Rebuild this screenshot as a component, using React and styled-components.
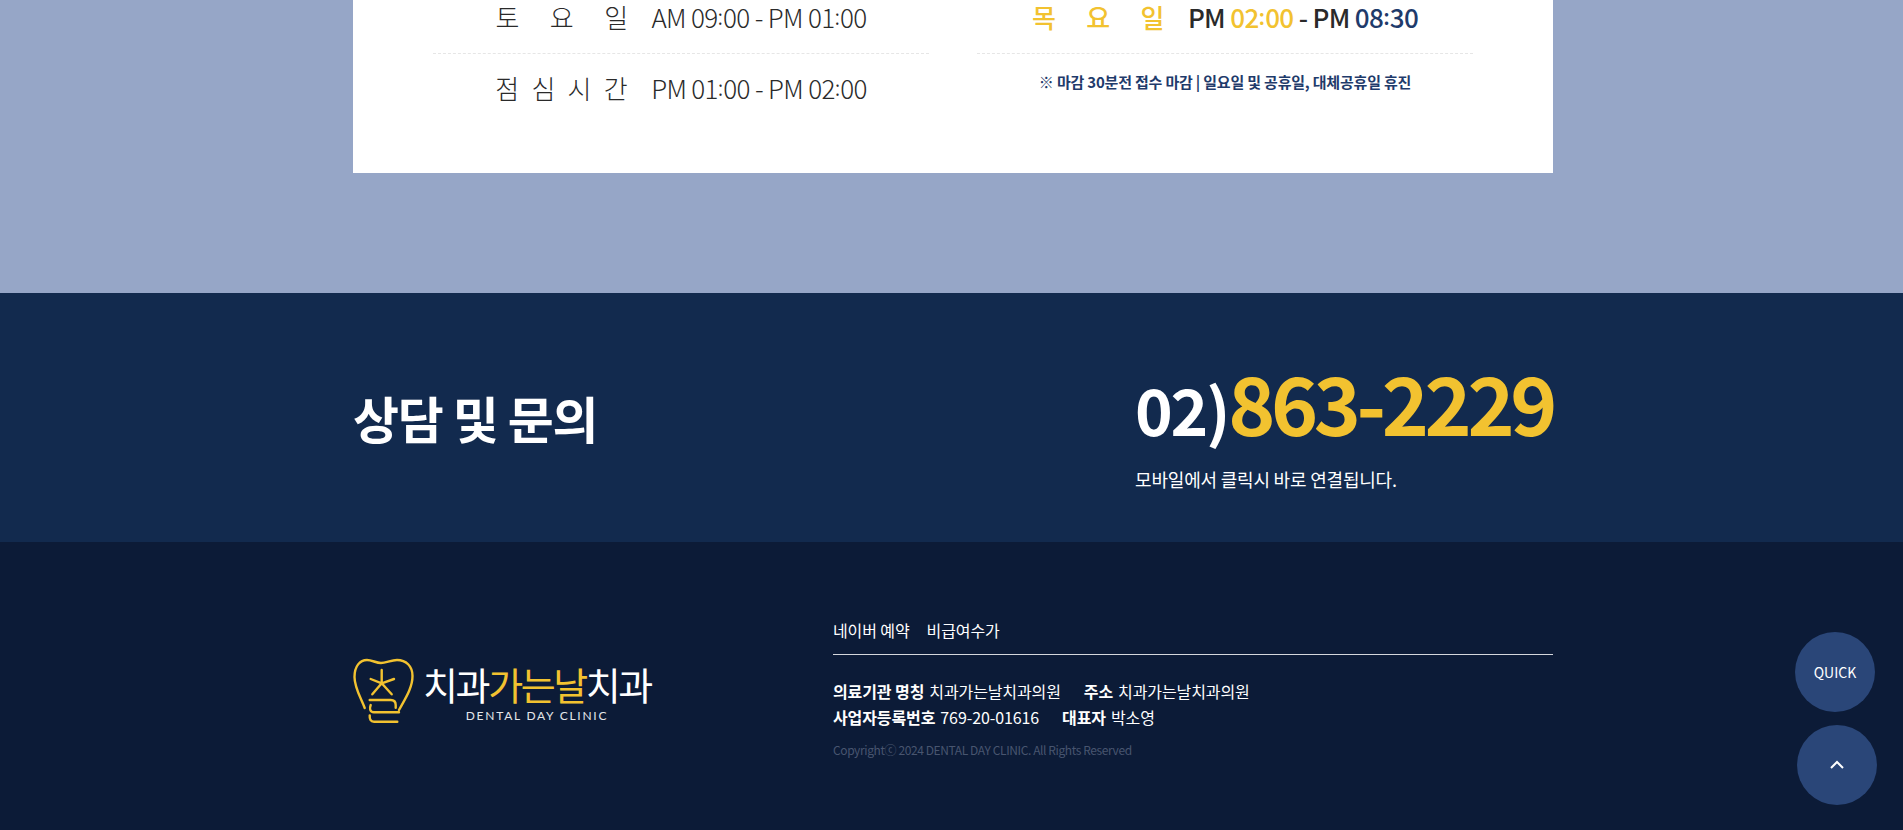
import React from "react";
import styled, { createGlobalStyle } from "styled-components";

const GlobalStyle = createGlobalStyle`
  html, body {
    margin: 0;
    padding: 0;
    overflow: hidden;
    background: #96a6c7;
    font-family: "Noto Sans CJK KR", "Noto Sans", sans-serif;
  }
  * { box-sizing: border-box; }
`;

const Wrapper = styled.div`
  width: 1200px;
  margin-left: 353px;
`;

const HoursSection = styled.section`
  height: 293px;
  background: #96a6c7;
`;

const Card = styled.div`
  width: 1200px;
  height: 173px;
  margin-left: 353px;
  padding: 0 80px;
  background: #fff;
  display: grid;
  grid-template-columns: 496px 496px;
  column-gap: 48px;
  align-content: start;
`;

const Row = styled.div`
  height: ${(p) => (p.$first ? 54 : 74)}px;
  padding-bottom: ${(p) => (p.$first ? 0 : 6)}px;
  display: flex;
  justify-content: center;
  align-items: ${(p) => (p.$first ? "flex-start" : "center")};
  gap: 24px;
  font-size: 26px;
  line-height: 34px;
  letter-spacing: -0.65px;
  color: #2a2a2a;
  font-weight: ${(p) => (p.$strong ? 500 : 300)};
  border-bottom: ${(p) => (p.$first ? "1px dashed #e6e6e6" : "0")};
`;

const Label = styled.span`
  width: 132px;
  text-align: justify;
  text-align-last: justify;
  color: ${(p) => p.$color || "inherit"};
`;

const Accent = styled.span`
  color: ${(p) => p.$color};
`;

const Colon = styled.span`
  font-size: 22px;
  vertical-align: 3px;
  line-height: 0;
  letter-spacing: 0;
`;

const Note = styled.p`
  margin: 0;
  height: 60px;
  font-size: 15px;
  font-weight: 700;
  line-height: 55px;
  letter-spacing: -0.2px;
  text-align: center;
  color: #1f3b6b;
`;

const NoteMark = styled.span`
  font-weight: 400;
`;

const ContactSection = styled.section`
  height: 249px;
  background: #122a4e;
`;

const ContactInner = styled(Wrapper)`
  height: 100%;
  display: flex;
  justify-content: space-between;
  align-items: flex-start;
`;

const ContactTitle = styled.h2`
  margin: 90px 0 0;
  font-size: 50px;
  line-height: 68px;
  font-weight: 700;
  letter-spacing: -1.2px;
  color: #fff;
`;

const Phone = styled.div`
  margin-top: 58px;
`;

const PhoneNumber = styled.div`
  display: flex;
  align-items: baseline;
  height: 100px;
  line-height: 100px;
  font-weight: 700;
  letter-spacing: -2.2px;
  color: #fff;
  font-size: 64px;
`;

const PhoneMain = styled.span`
  font-size: 80px;
  letter-spacing: -4.4px;
  color: #f2c230;
`;

const PhoneHint = styled.p`
  margin: 15px 0 0;
  font-size: 18px;
  line-height: 27px;
  letter-spacing: -0.2px;
  color: #fff;
`;

const Footer = styled.footer`
  height: 288px;
  background: #0c1b37;
`;

const FooterInner = styled(Wrapper)`
  display: flex;
  align-items: flex-start;
`;

const Logo = styled.div`
  width: 480px;
  margin-top: 116px;
  display: flex;
  align-items: flex-start;
  gap: 8px;
`;

const LogoText = styled.div`
  margin-top: 5px;
  display: flex;
  flex-direction: column;
  align-items: center;
  color: #fff;
`;

const LogoName = styled.div`
  font-size: 38px;
  line-height: 42px;
  font-weight: 400;
  letter-spacing: -2.4px;
  white-space: nowrap;
`;

const LogoSub = styled.div`
  margin-top: 3px;
  font-family: "Lato", sans-serif;
  font-size: 12px;
  line-height: 16px;
  letter-spacing: 1.75px;
  color: #e4e6ea;
`;

const FooterBody = styled.div`
  flex: 1;
`;

const FooterNav = styled.nav`
  margin-top: 74px;
  height: 39px;
  display: flex;
  gap: 17px;
  border-bottom: 1px solid #d5d7dc;
`;

const NavLink = styled.a`
  font-size: 16px;
  line-height: 28px;
  letter-spacing: -0.1px;
  color: #fff;
`;

const InfoList = styled.div`
  margin-top: 23px;
`;

const InfoLine = styled.div`
  display: flex;
  gap: 23px;
  font-size: 16px;
  line-height: 26px;
  letter-spacing: -0.1px;
  color: #fff;
`;

const InfoTitle = styled.strong`
  font-weight: 700;
  margin-right: 5px;
`;

const Copyright = styled.p`
  margin: 11px 0 0;
  font-size: 12px;
  line-height: 18px;
  letter-spacing: -0.4px;
  color: #48556f;
`;

const FloatButton = styled.a`
  position: fixed;
  top: ${(p) => p.$top}px;
  left: ${(p) => p.$left}px;
  width: 80px;
  height: 80px;
  border-radius: 50%;
  background: #2a4678;
  display: flex;
  align-items: center;
  justify-content: center;
  color: #fff;
  font-size: 14px;
`;

const ToothLogo = () => (
  <svg width="62" height="66" viewBox="4 3 62 66" fill="none" stroke="#f2c230" strokeWidth="2.4" strokeLinecap="round" strokeLinejoin="round">
    <path d="M15.7 53 C12 43 5.5 33 5.5 22 C5.5 11 11 5 18 5 C23 5 27 8 32 8 C37 8 42 5 48 5 C57 5 63.5 11 63.5 21 C63.5 33 56 44 50 55" />
    <path d="M32.7 15 V28.3 M21.7 24 L32.7 28.3 L45 24 M23.3 39.3 L32.7 28.3 L42.7 39.3" />
    <path d="M20.7 45 H41.7 C45 45 46.7 47 46.7 50 V52.7" />
    <path d="M21.7 50 C20.5 53 20.5 57.3 25 57.3 H50" />
    <path d="M20.7 60.5 C20.5 64 21.5 66.7 25 66.7 H48.3" />
  </svg>
);

const Time = ({ children }) => {
  const parts = children.split(":");
  return (
    <>
      {parts[0]}
      <Colon>:</Colon>
      {parts[1]}
    </>
  );
};

const App = () => {
  return (
    <>
      <GlobalStyle />
      <HoursSection>
        <Card>
          <Row $first>
            <Label>토 요 일</Label>
            <span>AM <Time>09:00</Time> - PM <Time>01:00</Time></span>
          </Row>
          <Row $first $strong>
            <Label $color="#f2c230">목 요 일</Label>
            <span>
              PM <Accent $color="#f2c230"><Time>02:00</Time></Accent> - PM <Accent $color="#1f3b6b"><Time>08:30</Time></Accent>
            </span>
          </Row>
          <Row>
            <Label>점 심 시 간</Label>
            <span>PM <Time>01:00</Time> - PM <Time>02:00</Time></span>
          </Row>
          <Note>
            <NoteMark>※</NoteMark> 마감 30분전 접수 마감 | 일요일 및 공휴일, 대체공휴일 휴진
          </Note>
        </Card>
      </HoursSection>
      <ContactSection>
        <ContactInner>
          <ContactTitle>상담 및 문의</ContactTitle>
          <Phone>
            <PhoneNumber>
              02)<PhoneMain>863-2229</PhoneMain>
            </PhoneNumber>
            <PhoneHint>모바일에서 클릭시 바로 연결됩니다.</PhoneHint>
          </Phone>
        </ContactInner>
      </ContactSection>
      <Footer>
        <FooterInner>
          <Logo>
            <ToothLogo />
            <LogoText>
              <LogoName>
                치과<Accent $color="#f2c230">가는날</Accent>치과
              </LogoName>
              <LogoSub>DENTAL DAY CLINIC</LogoSub>
            </LogoText>
          </Logo>
          <FooterBody>
            <FooterNav>
              <NavLink>네이버 예약</NavLink>
              <NavLink>비급여수가</NavLink>
            </FooterNav>
            <InfoList>
              <InfoLine>
                <span><InfoTitle>의료기관 명칭</InfoTitle>치과가는날치과의원</span>
                <span><InfoTitle>주소</InfoTitle>치과가는날치과의원</span>
              </InfoLine>
              <InfoLine>
                <span><InfoTitle>사업자등록번호</InfoTitle>769-20-01616</span>
                <span><InfoTitle>대표자</InfoTitle>박소영</span>
              </InfoLine>
            </InfoList>
            <Copyright>Copyrightⓒ 2024 DENTAL DAY CLINIC. All Rights Reserved</Copyright>
          </FooterBody>
        </FooterInner>
      </Footer>
      <FloatButton $top={632} $left={1795}>QUICK</FloatButton>
      <FloatButton $top={725} $left={1797}>
        <svg width="16" height="10" viewBox="0 0 16 10" fill="none" stroke="#fff" strokeWidth="2">
          <path d="M2 8 L8 2 L14 8" />
        </svg>
      </FloatButton>
    </>
  );
};

export default App;
